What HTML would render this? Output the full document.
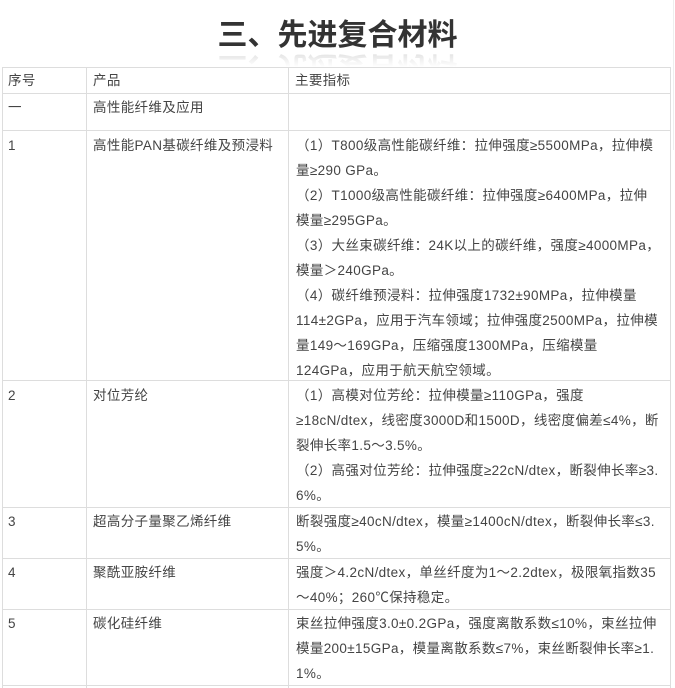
<!DOCTYPE html>
<html><head><meta charset="utf-8"><style>
body{margin:0;width:675px;height:688px;background:#fff;position:relative;overflow:hidden;font-family:"Liberation Sans","Noto Sans CJK SC",sans-serif;color:#444;}
.t{position:absolute;left:0;width:675px;top:16px;text-align:center;font-size:30px;font-weight:bold;color:#333;line-height:40px;}
.r{position:absolute;left:0;width:675px;top:52px;height:15px;overflow:hidden;opacity:.15;-webkit-mask-image:linear-gradient(#000,transparent);mask-image:linear-gradient(#000,transparent);}
.r div{text-align:center;font-size:30px;font-weight:bold;line-height:40px;color:#333;transform:scaleY(-1);margin-top:-6px;}
.h{position:absolute;height:1px;background:#ddd;left:2px;width:669px;}
.v{position:absolute;width:1px;background:#ddd;top:67px;height:621px;}
.c{position:absolute;font-size:13.5px;letter-spacing:0.35px;line-height:25px;white-space:nowrap;}
</style></head><body>
<div class="t">三、先进复合材料</div>
<div class="r"><div>三、先进复合材料</div></div>
<div style="position:absolute;left:673px;top:0;width:1px;height:150px;background:#eee"></div>
<div class="h" style="top:67px"></div>
<div class="h" style="top:93px"></div>
<div class="h" style="top:130px"></div>
<div class="h" style="top:380px"></div>
<div class="h" style="top:507px"></div>
<div class="h" style="top:558px"></div>
<div class="h" style="top:609px"></div>
<div class="h" style="top:685px"></div>
<div class="v" style="left:2px"></div>
<div class="v" style="left:86px"></div>
<div class="v" style="left:288px"></div>
<div class="v" style="left:670px"></div>

<div class="c" style="left:8px;top:68px">序号</div>
<div class="c" style="left:93px;top:68px">产品</div>
<div class="c" style="left:295px;top:68px">主要指标</div>

<div class="c" style="left:8px;top:95px">一</div>
<div class="c" style="left:93px;top:95px">高性能纤维及应用</div>

<div class="c" style="left:8px;top:133px">1</div>
<div class="c" style="left:93px;top:133px">高性能PAN基碳纤维及预浸料</div>
<div class="c" style="left:296px;top:133px">（1）T800级高性能碳纤维：拉伸强度≥5500MPa，拉伸模<br>量≥290 GPa。<br>（2）T1000级高性能碳纤维：拉伸强度≥6400MPa，拉伸<br>模量≥295GPa。<br>（3）大丝束碳纤维：24K以上的碳纤维，强度≥4000MPa，<br>模量＞240GPa。<br>（4）碳纤维预浸料：拉伸强度1732±90MPa，拉伸模量<br>114±2GPa，应用于汽车领域；拉伸强度2500MPa，拉伸模<br>量149～169GPa，压缩强度1300MPa，压缩模量<br>124GPa，应用于航天航空领域。</div>

<div class="c" style="left:8px;top:383px">2</div>
<div class="c" style="left:93px;top:383px">对位芳纶</div>
<div class="c" style="left:296px;top:383px">（1）高模对位芳纶：拉伸模量≥110GPa，强度<br>≥18cN/dtex，线密度3000D和1500D，线密度偏差≤4%，断<br>裂伸长率1.5～3.5%。<br>（2）高强对位芳纶：拉伸强度≥22cN/dtex，断裂伸长率≥3.<br>6%。</div>

<div class="c" style="left:8px;top:509px">3</div>
<div class="c" style="left:93px;top:509px">超高分子量聚乙烯纤维</div>
<div class="c" style="left:296px;top:509px">断裂强度≥40cN/dtex，模量≥1400cN/dtex，断裂伸长率≤3.<br>5%。</div>

<div class="c" style="left:8px;top:560px">4</div>
<div class="c" style="left:93px;top:560px">聚酰亚胺纤维</div>
<div class="c" style="left:296px;top:560px">强度＞4.2cN/dtex，单丝纤度为1～2.2dtex，极限氧指数35<br>～40%；260℃保持稳定。</div>

<div class="c" style="left:8px;top:611px">5</div>
<div class="c" style="left:93px;top:611px">碳化硅纤维</div>
<div class="c" style="left:296px;top:611px">束丝拉伸强度3.0±0.2GPa，强度离散系数≤10%，束丝拉伸<br>模量200±15GPa，模量离散系数≤7%，束丝断裂伸长率≥1.<br>1%。</div>
</body></html>
